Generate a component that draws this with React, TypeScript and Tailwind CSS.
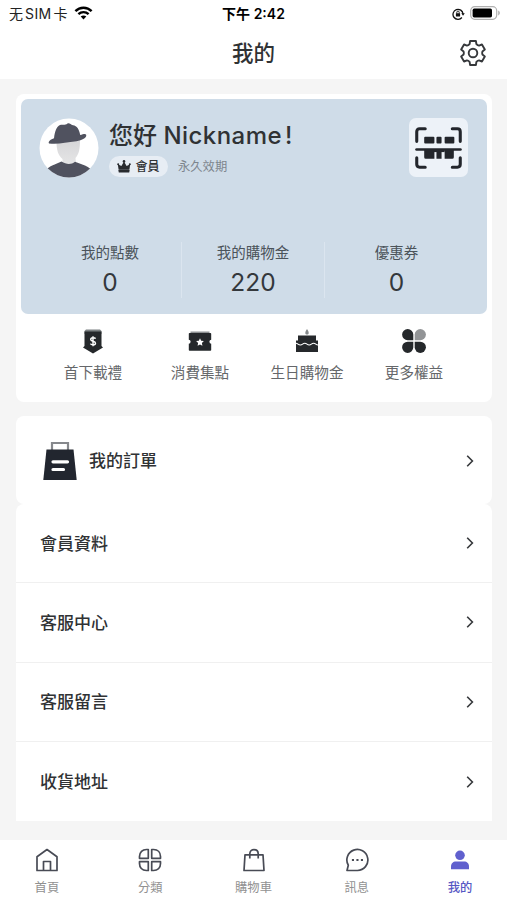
import type { ReactNode } from 'react'

const WifiIcon = () => (
    <svg width="19" height="14" viewBox="0 0 18 14" fill="none" stroke="#000" strokeWidth="2.4" className="-mt-[2px]">
        <path d="M0.9 5.2C5.4 0.6 12.6 0.6 17.1 5.2" />
        <path d="M3.9 8.2C6.8 5.4 11.2 5.4 14.1 8.2" />
        <path d="M9 13.4L6.2 10.6C7.8 9.2 10.2 9.2 11.8 10.6Z" fill="#000" stroke="none" />
    </svg>
)

const LockIcon = () => (
    <svg width="13" height="12" viewBox="0 0 13 12" fill="none" stroke="#111" className="mt-px">
        <path d="M9.9 9.5A5 5 0 1 1 11 6" strokeWidth="1.3" />
        <path d="M9.3 5.2H12.8L11 7.8Z" fill="#111" stroke="none" />
        <rect x="3.9" y="5.3" width="4.2" height="3.3" rx="0.5" fill="#111" stroke="none" />
        <path d="M4.8 5.6V4.3A1.2 1.2 0 0 1 7.2 4.3V5.6" strokeWidth="0.9" />
    </svg>
)

const BatteryIcon = () => (
    <svg width="31" height="14" viewBox="0 0 31 14">
        <rect x="0.7" y="0.7" width="26" height="12.6" rx="4" fill="#fff" stroke="#b0b0b0" strokeWidth="1.2" />
        <rect x="2.6" y="2.6" width="19.4" height="8.8" rx="1.6" fill="#000" />
        <path d="M28.2 4.6C30.4 5.4 30.4 8.6 28.2 9.4Z" fill="#b0b0b0" />
    </svg>
)

const GearIcon = () => (
    <svg width="28" height="28" viewBox="-14 -14 28 28" fill="none" stroke="#36383b" strokeWidth="1.9" strokeLinejoin="round">
        <path d="M-2.9 -12H2.9L3.4 -8.9Q4.7 -7.500 6 -7.400L8.940 -8.510L11.840 -3.490L9.410 -1.510Q8.900 0 9.410 1.510L11.840 3.490L8.940 8.510L6 7.400Q4.700 7.500 3.400 8.900L2.900 12H-2.900L-3.400 8.900Q-4.700 7.500 -6 7.400L-8.940 8.510L-11.840 3.490L-9.410 1.510Q-8.900 0 -9.410 -1.510L-11.840 -3.490L-8.940 -8.510L-6 -7.400Q-4.700 -7.500 -3.400 -8.900Z" />
        <circle r="4.3" />
    </svg>
)

const Avatar = () => (
    <svg width="60" height="60" viewBox="0 0 60 60" className="shrink-0">
        <defs>
            <clipPath id="avatarClip">
                <circle cx="30" cy="30" r="29.5" />
            </clipPath>
            <linearGradient id="faceShade" x1="0" y1="0" x2="0" y2="1">
                <stop offset="0" stopColor="#d6d6d8" />
                <stop offset="1" stopColor="#e5e5e6" />
            </linearGradient>
        </defs>
        <g clipPath="url(#avatarClip)">
            <rect width="60" height="60" fill="#fff" />
            <path d="M17.5 23C17.5 32 19 37 23.5 41L23.5 46H37L36.5 40C40 36 41 31 41 22Z" fill="url(#faceShade)" />
            <path d="M22.500 43.500C27 46.500 32 47 36 43.800L46 47.500C50 49 53 52 55 56V60H5V56C7 51 10 48.500 15 46.700Z" fill="#50525f" />
            <path d="M10 25.500C8.700 23.300 12 21.400 15 20.200C16 13 17.500 8.400 21 7C23.500 6.200 26 7.600 28.500 5.500C31 4.800 31.500 7 34 7.300C38 8 40 11 41.200 17C44 16.500 46.300 15.300 47.200 16.800C48 20 43 22.300 37.500 23.300C27 24.500 19 26.600 10 25.500Z" fill="#50525f" />
        </g>
    </svg>
)

const CrownIcon = () => (
    <svg width="14" height="13" viewBox="0 0 14 13" fill="#292b2f">
        <circle cx="7" cy="1.4" r="1.3" />
        <circle cx="1.2" cy="4.2" r="1" />
        <circle cx="12.8" cy="4.2" r="1" />
        <path d="M0.8 4.2L4.4 6L7 1.5L9.6 6L13.200 4.200L12.400 9.800H1.600Z" />
        <rect x="1.6" y="9.8" width="10.8" height="2.6" rx="0.4" />
    </svg>
)

const ScanIcon = () => (
    <svg width="47" height="42" viewBox="0 0 46 41" fill="none" stroke="#23262c" strokeWidth="3" strokeLinecap="round" strokeLinejoin="round">
        <path d="M1.7 14V4.5Q1.7 1.7 4.5 1.7H10M36.500 1.700H41.5Q44.300 1.700 44.300 4.500V14M44.300 30V36.500Q44.300 39.300 41.500 39.300H36.500M10 39.300H4.500Q1.700 39.300 1.700 36.500V30" />
        <path d="M1.500 22H44.500" strokeWidth="2.600" />
        <g fill="#23262c" stroke="none">
            <rect x="9" y="9.500" width="10" height="6.500" rx="1" />
            <rect x="21" y="9.500" width="5" height="6.500" rx="1" />
            <rect x="29" y="9.500" width="9.500" height="6.500" rx="1" />
            <path d="M9 22H19V31H10.500Q9 31 9 29.500ZM21 22H26V31H21ZM29 22H38V29.500Q38 31 36.500 31H29Z" />
            <rect x="18" y="22" width="11" height="2.500" />
        </g>
    </svg>
)

const DownloadGiftIcon = () => (
    <svg width="22" height="26" viewBox="0 0 22 26">
        <path d="M2.500 2L4 0.500H18L19.500 2V5H2.500Z" fill="#7b8082" />
        <path d="M2.500 2.500H19.500V17L21 18.500L11 24.500L1 18.500L2.500 17Z" fill="#25282b" />
        <path d="M13.500 9.700C13 8.300 8.700 8.200 8.700 10.500C8.700 12.700 13.500 11.700 13.500 14.200C13.500 16.400 9 16.300 8.500 14.600M11 7.200V17.300" stroke="#fff" strokeWidth="1.400" fill="none" />
    </svg>
)

const TicketIcon = () => (
    <svg width="24" height="26" viewBox="0 0 24 26">
        <path d="M2.500 2.500H21.500V6H2.500Z" fill="#8d9092" />
        <rect x="0.800" y="4" width="22.400" height="17.800" rx="0.800" fill="#25282b" />
        <circle cx="0.600" cy="12.700" r="2" fill="#fff" />
        <circle cx="23.400" cy="12.700" r="2" fill="#fff" />
        <path d="M12 9.300L13.200 11.800L15.900 12.100L13.900 14L14.400 16.700L12 15.400L9.600 16.700L10.100 14L8.100 12.100L10.800 11.800Z" fill="#fff" />
    </svg>
)

const CakeIcon = () => (
    <svg width="24" height="26" viewBox="0 0 24 26">
        <path d="M12 0C14.500 3.500 14 5.600 12 5.600C10 5.600 9.500 3.500 12 0Z" fill="#85898b" />
        <path d="M3 6.500H21V11.500H23V23H1V11.500H3Z" fill="#25282b" />
        <path d="M1 14.300C3 14.300 3 16 5.400 16C7.600 16 7.600 14.300 9.800 14.300C12 14.300 12 16 14.200 16C16.400 16 16.400 14.300 18.600 14.300C20.800 14.300 20.800 16 23 16" stroke="#fff" strokeWidth="1.100" fill="none" />
    </svg>
)

const CloverIcon = () => (
    <svg width="24" height="26" viewBox="0 0 24 26" fill="#25282b">
        <path d="M11.300 11.200H5.700A5.600 5.600 0 1 1 11.300 5.600Z" />
        <path d="M12.700 11.200H18.300A5.600 5.600 0 1 0 12.700 5.600Z" fill="#929496" />
        <path d="M11.300 12.700H5.700A5.600 5.600 0 1 0 11.300 18.300Z" />
        <path d="M12.700 12.700H18.300A5.600 5.600 0 1 1 12.700 18.300Z" />
    </svg>
)

const OrderBagIcon = () => (
    <svg width="34" height="40" viewBox="0 0 34 40">
        <path d="M9 9V2H25V9" fill="none" stroke="#86888c" strokeWidth="2.200" />
        <path d="M3.500 8.500H30.500L33.700 39H0.300Z" fill="#22262f" />
        <path d="M10 20.800H24.500M10 28.500H20.500" stroke="#fff" strokeWidth="3.200" strokeLinecap="round" />
    </svg>
)

const Chevron = () => (
    <svg width="8" height="12" viewBox="0 0 8 12" fill="none" stroke="#36383b" strokeWidth="1.600">
        <path d="M1.200 0.800L6.400 6L1.200 11.200" />
    </svg>
)

const TabIcon = ({ children }: { children: ReactNode }) => (
    <svg width="24" height="24" viewBox="0 0 24 24" fill="none" stroke="#484b55" strokeWidth="1.700" strokeLinejoin="round">
        {children}
    </svg>
)

const stats = [
    { label: '我的點數', value: 0 },
    { label: '我的購物金', value: 220 },
    { label: '優惠券', value: 0 },
]

const benefits = [
    { label: '首下載禮', icon: <DownloadGiftIcon /> },
    { label: '消費集點', icon: <TicketIcon /> },
    { label: '生日購物金', icon: <CakeIcon /> },
    { label: '更多權益', icon: <CloverIcon /> },
]

const menu = ['會員資料', '客服中心', '客服留言', '收貨地址']

const tabs = [
    {
        label: '首頁',
        icon: <TabIcon><path d="M2 8.700L12 1.500L22 8.700V22.500H2ZM8.500 22.500V13.500H15.500V22.500" /></TabIcon>,
    },
    {
        label: '分類',
        icon: (
            <TabIcon>
                <path d="M10.300 10.300H1.500V8.500C1.500 4 4.500 1.500 8.500 1.500H10.300ZM13.700 10.300V1.500H15.500C20 1.500 22.500 4.500 22.500 8.500V10.300ZM10.300 13.700V22.500H8.500C4 22.500 1.500 19.500 1.500 15.500V13.700ZM13.700 13.700H22.500V15.500C22.500 20 19.500 22.500 15.500 22.500H13.700Z" />
            </TabIcon>
        ),
    },
    {
        label: '購物車',
        icon: <TabIcon><path d="M3 6.800H21L22 22.500H2ZM7.800 10.500V5.800C7.800 0.200 16.200 0.200 16.200 5.800V10.500" /></TabIcon>,
    },
    {
        label: '訊息',
        icon: (
            <TabIcon>
                <path d="M2 22.500H12.500A10.500 10.500 0 1 0 3.300 17.300Z" />
                <path d="M6.900 12H9M11.400 12H13.500M15.900 12H18" strokeWidth="2" />
            </TabIcon>
        ),
    },
    {
        label: '我的',
        active: true,
        icon: (
            <svg width="24" height="24" viewBox="0 0 24 24" fill="#6060ce">
                <circle cx="12" cy="7.300" r="4.800" />
                <path d="M3 21.200V18.500C3 15.500 5 13.500 8 13.500H16C19 13.500 21 15.500 21 18.500V21.200Z" />
            </svg>
        ),
    },
]

export default function App() {
    return (
        <div className="flex h-[900px] w-[507px] flex-col overflow-hidden bg-[#f5f5f5] font-['Inter','Noto_Sans_CJK_TC',sans-serif] text-[#303234]">
            <div className="grid h-7 shrink-0 grid-cols-3 items-center bg-white text-[14px] text-black">
                <div className="flex items-center gap-[6px] pl-[9px] text-[#222]">
                    <span className="flex gap-[2px] whitespace-nowrap font-['Inter','Noto_Sans_CJK_SC',sans-serif] leading-5">
                        <span>无</span>
                        <span className="tracking-[0.4px]">SIM</span>
                        <span>卡</span>
                    </span>
                    <WifiIcon />
                </div>
                <span className="text-center leading-5 font-semibold">下午 2:42</span>
                <div className="-mt-[2px] flex items-center justify-end gap-[5px] pr-[6px]">
                    <LockIcon />
                    <BatteryIcon />
                </div>
            </div>

            <header className="grid h-[51px] shrink-0 grid-cols-[1fr_auto_1fr] items-center bg-white pb-[2px]">
                <span />
                <h1 className="text-[21.500px] leading-8 font-medium">我的</h1>
                <div className="mr-[20px] justify-self-end">
                    <GearIcon />
                </div>
            </header>

            <main className="flex-1 pt-[15px] pr-[15px] pl-4">
                <section className="h-[308px] rounded-lg bg-white p-[5px]">
                    <div className="flex h-[215px] flex-col rounded-[7px] bg-[#cfdce8]">
                        <div className="flex items-start pt-[19px] pr-[19px] pl-[18px]">
                            <Avatar />
                            <div className="ml-[10px] flex-1">
                                <p className="pt-px text-[24px] leading-[34px] font-medium whitespace-nowrap">
                                    您好 <span className="tracking-[0.45px]">Nickname</span>
                                    <span className="ml-[3px]">!</span>
                                </p>
                                <div className="mt-[3px] flex items-center gap-[10px]">
                                    <span className="flex h-[21px] w-[59px] items-center justify-center gap-[4px] rounded-full bg-[#e7edf4] text-[12px] font-medium">
                                        <CrownIcon />
                                        會員
                                    </span>
                                    <span className="text-[12.300px] leading-5 text-[#7d858d]">永久效期</span>
                                </div>
                            </div>
                            <div className="flex size-[59px] items-center justify-center rounded-[7px] bg-[#edf2f8]">
                                <ScanIcon />
                            </div>
                        </div>
                        <div className="mt-auto mb-4 flex h-[56px] justify-center divide-x divide-[#dbe5ef] pr-px">
                            {stats.map((item) => (
                                <div key={item.label} className="flex w-[143px] flex-col items-center">
                                    <span className="text-[14.500px] leading-[22px] text-[#4b535a]">{item.label}</span>
                                    <span className="text-[24.500px] leading-9 text-[#34383c]">{item.value}</span>
                                </div>
                            ))}
                        </div>
                    </div>
                    <div className="flex justify-center pt-[15px] pr-px">
                        {benefits.map((item) => (
                            <div key={item.label} className="flex w-[107px] flex-col items-center">
                                {item.icon}
                                <span className="mt-[7px] text-[14.600px] leading-[22px] text-[#65676a]">{item.label}</span>
                            </div>
                        ))}
                    </div>
                </section>

                <section className="mt-[14px] flex h-[88px] items-center rounded-lg bg-white pt-[2px] pr-[18px] pl-[27px]">
                    <OrderBagIcon />
                    <span className="ml-3 flex-1 pt-[2px] text-[17px] font-medium">我的訂單</span>
                    <Chevron />
                </section>
                <section className="divide-y divide-[#f0f0f0] rounded-t-lg bg-white">
                    {menu.map((label) => (
                        <div key={label} className="flex h-[79.300px] items-center pr-[18px] pl-6">
                            <span className="flex-1 pt-[3px] text-[17px] font-medium">{label}</span>
                            <Chevron />
                        </div>
                    ))}
                </section>
            </main>

            <nav className="flex h-[60px] shrink-0 justify-center bg-white">
                {tabs.map((tab) => (
                    <div key={tab.label} className="flex w-[103.300px] shrink-0 flex-col items-center pt-[8px]">
                        {tab.icon}
                        <span className={tab.active ? 'mt-[7px] text-[12.300px] leading-[18px] font-medium text-[#5657c4]' : 'mt-[7px] text-[12.300px] leading-[18px] text-[#919191]'}>
                            {tab.label}
                        </span>
                    </div>
                ))}
            </nav>
        </div>
    )
}
